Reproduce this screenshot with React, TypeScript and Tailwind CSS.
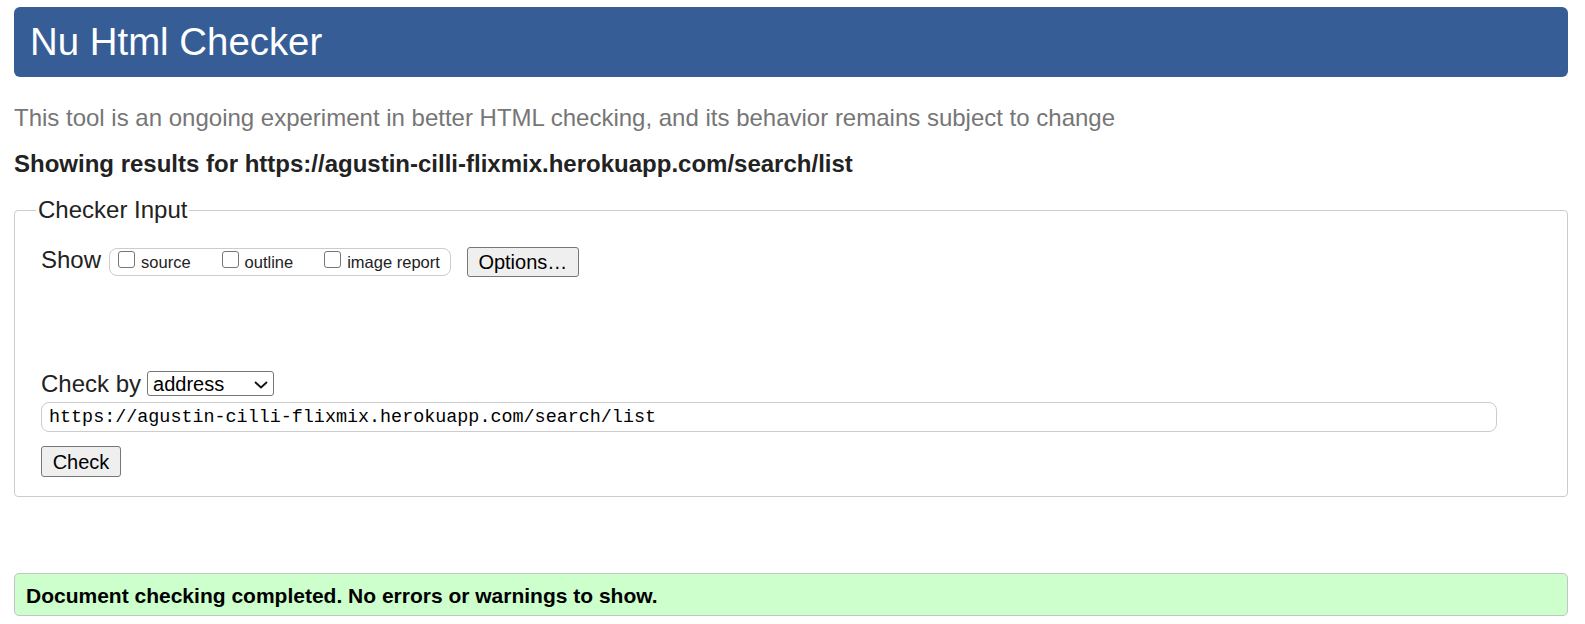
import React from "react";

const App: React.FC = () => {
  const url = "https://agustin-cilli-flixmix.herokuapp.com/search/list";

  const showOptions = [
    { id: "source", label: "source" },
    { id: "outline", label: "outline" },
    { id: "image", label: "image report" },
  ];

  return (
    <div className="min-h-screen bg-white pl-[14px] pt-[7px] pb-[8px] font-['Liberation_Sans',Arial,sans-serif] text-[#222]">
      <div className="w-[1554px]">
        {/* Header */}
        <div className="flex h-[70px] items-center rounded-[6px] bg-[#365d95] pl-[16px]">
          <h1 className="text-[38.4px] leading-none text-white">Nu Html Checker</h1>
        </div>

        <p className="mt-[27px] text-[24px] leading-[28px] text-[#767676]">
          This tool is an ongoing experiment in better HTML checking, and its behavior remains subject to change
        </p>

        <p className="mt-[18px] text-[24px] font-bold leading-[28px] text-[#222]">
          Showing results for {url}
        </p>

        {/* Checker Input */}
        <fieldset className="mt-[18px] rounded-[4px] border border-[#cccccc]">
          <legend className="ml-[21px] px-[2px] text-[24px] leading-[28px]">Checker Input</legend>
          <div className="pl-[26px] pt-[23px] pb-[19px]">
            <div className="flex h-[30px] items-center">
              <span className="mb-[4px] text-[24px] leading-[28px]">Show</span>
              <div className="ml-[8px] flex h-[28px] items-center rounded-[8px] border border-[#cccccc] pl-[8px] pr-[10px]">
                {showOptions.map((opt, idx) => (
                  <label
                    key={opt.id}
                    className={`flex items-center ${idx > 0 ? "ml-[31px]" : ""}`}
                  >
                    <input
                      type="checkbox"
                      className="mb-[6px] h-[17px] w-[17px] appearance-none rounded-[3px] border border-[#767676] bg-white"
                    />
                    <span className="ml-[6px] text-[16.5px] leading-[20px]">{opt.label}</span>
                  </label>
                ))}
              </div>
              <button className="ml-[16px] h-[30px] w-[112px] rounded-[3px] border border-[#767676] bg-[#efefef] text-[20px] leading-none text-black">
                Options…
              </button>
            </div>

            <div className="mt-[93px] flex h-[28px] items-center">
              <span className="text-[24px] leading-[28px]">Check by</span>
              <div className="relative ml-[6px]">
                <select className="h-[25px] w-[127px] appearance-none rounded-[3px] border border-[#767676] bg-white pl-[5px] pt-[1px] text-[20px] leading-none text-black">
                  <option>address</option>
                </select>
                <svg
                  className="pointer-events-none absolute right-[6px] top-[10px]"
                  width="14"
                  height="8"
                  viewBox="0 0 14 8"
                  fill="none"
                >
                  <polyline points="1,1 7,6.5 13,1" stroke="#111" strokeWidth="1.8" />
                </svg>
              </div>
            </div>

            <input
              type="text"
              readOnly
              value={url}
              className="mt-[4px] block h-[30px] w-[1456px] rounded-[8px] border border-[#cccccc] bg-white pl-[7px] font-['Liberation_Mono','DejaVu_Sans_Mono',monospace] text-[18.4px] text-black outline-none"
            />

            <button className="mt-[14px] block h-[31px] w-[80px] rounded-[3px] border border-[#767676] bg-[#efefef] text-[20px] leading-none text-black">
              Check
            </button>
          </div>
        </fieldset>

        {/* Result */}
        <div className="mt-[76px] flex h-[43px] items-center rounded-[5px] border border-[#c4c4c4] bg-[#ccffcc] pl-[11px] pt-[2px]">
          <span className="text-[21px] font-bold leading-[24px] text-black">
            Document checking completed. No errors or warnings to show.
          </span>
        </div>
      </div>
    </div>
  );
};

export default App;
